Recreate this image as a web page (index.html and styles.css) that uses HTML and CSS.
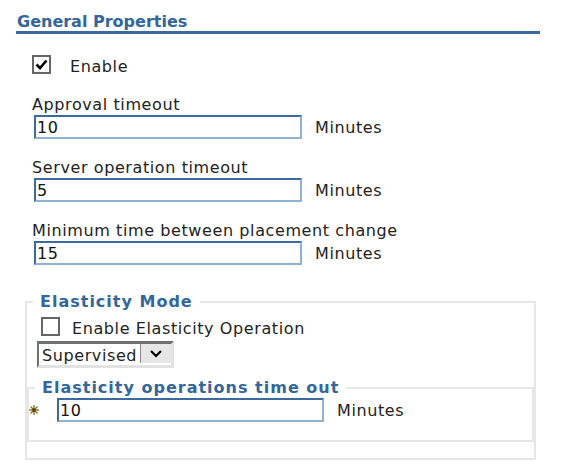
FILE: index.html
```html
<!DOCTYPE html>
<html>
<head>
<meta charset="utf-8">
<link rel="stylesheet" href="styles.css">
</head>
<body>
<div class="page">
  <h2 class="title">General Properties</h2>
  <div class="props">
    <div class="check-row">
      <span class="cb"><svg width="13" height="11" viewBox="0 0 13 11"><polyline points="1.5,5.5 5,9 11.5,1.5" fill="none" stroke="#000" stroke-width="2.6"/></svg></span>
      <span class="cb-label">Enable</span>
    </div>
    <div class="fields">
      <div class="field">
        <div class="label">Approval timeout</div>
        <div class="inrow"><input class="txt" type="text" value="10"><span class="unit">Minutes</span></div>
      </div>
      <div class="field">
        <div class="label">Server operation timeout</div>
        <div class="inrow"><input class="txt" type="text" value="5"><span class="unit">Minutes</span></div>
      </div>
      <div class="field">
        <div class="label">Minimum time between placement change</div>
        <div class="inrow"><input class="txt" type="text" value="15"><span class="unit">Minutes</span></div>
      </div>
    </div>
  </div>
  <fieldset class="mode">
    <legend class="lg">Elasticity Mode</legend>
    <div class="check-row inner">
      <span class="cb"></span>
      <span class="cb-label">Enable Elasticity Operation</span>
    </div>
    <div class="select-wrap">
      <div class="select">
        <span class="sel-text">Supervised</span>
        <span class="sel-btn"><svg width="12" height="8" viewBox="0 0 12 8"><polyline points="1,1 6,6 11,1" fill="none" stroke="#000" stroke-width="2.2"/></svg></span>
      </div>
    </div>
    <fieldset class="sub">
      <legend class="lg">Elasticity operations time out</legend>
      <div class="inrow req">
        <svg class="star" width="10" height="10" viewBox="0 0 10 10">
          <g stroke="#8c7a2e" stroke-width="1.4">
            <line x1="5" y1="0" x2="5" y2="10"/>
            <line x1="0" y1="5" x2="10" y2="5"/>
            <line x1="1.5" y1="1.5" x2="8.5" y2="8.5"/>
            <line x1="8.5" y1="1.5" x2="1.5" y2="8.5"/>
          </g>
          <circle cx="5" cy="5" r="2" fill="#5c4c14"/>
        </svg>
        <input class="txt" type="text" value="10"><span class="unit">Minutes</span>
      </div>
    </fieldset>
  </fieldset>
</div>
</body>
</html>
```

FILE: styles.css
```css
body {
  margin: 0;
  font-family: "DejaVu Sans", Verdana, sans-serif;
  font-size: 16px;
  color: #222;
  letter-spacing: 0.6px;
  background: #fff;
}
.page {
  padding-left: 16px;
  width: 524px;
}
.title {
  margin: 0;
  padding: 12px 0 0 1px;
  font-size: 16px;
  line-height: 19px;
  font-weight: bold;
  color: #336699;
  letter-spacing: 0;
  border-bottom: 3px solid #3a6a9f;
}
.props {
  padding: 21px 0 0 16px;
}
.check-row {
  display: flex;
  align-items: flex-start;
}
.cb {
  width: 19px;
  height: 19px;
  box-sizing: border-box;
  border: 2px solid #666;
  background: #fff;
  display: flex;
  align-items: center;
  justify-content: center;
  flex: none;
}
.cb-label {
  margin-top: 2px;
  margin-left: 19px;
  line-height: 19px;
}
.fields {
  display: flex;
  flex-direction: column;
  gap: 19px;
  margin-top: 19px;
}
.label {
  line-height: 19px;
}
.inrow {
  display: flex;
  align-items: center;
  margin-top: 1px;
}
.txt {
  box-sizing: border-box;
  width: 268px;
  height: 24px;
  margin: 0 0 0 2px;
  padding: 0 0 0 1px;
  border-style: solid;
  border-width: 2px;
  border-color: #3a6a9f #8fb1d3 #8fb1d3 #3a6a9f;
  font: inherit;
  letter-spacing: inherit;
  color: #111;
  background: #fff;
  outline: none;
}
.unit {
  margin-left: 13px;
  line-height: 19px;
}
.mode {
  margin: 27px 0 0 9px;
  width: 511px;
  box-sizing: border-box;
  border: 2px solid #e6e6e6;
  padding: 0 0 16px 0;
  min-width: 0;
}
.lg {
  margin-left: 6px;
  padding: 0 7px;
  font-weight: bold;
  color: #336699;
  letter-spacing: 1px;
  line-height: 19px;
}
.check-row.inner {
  margin: 6px 0 0 14px;
}
.check-row.inner .cb-label {
  margin-left: 12px;
}
.select-wrap {
  margin: 3px 0 0 10px;
}
.select {
  display: inline-flex;
  align-items: stretch;
  height: 27px;
  box-sizing: border-box;
  border-style: solid;
  border-width: 3px 3px 3px 2px;
  border-color: #707070 #e2e2e2 #e2e2e2 #707070;
  background: #fff;
}
.sel-text {
  padding: 2px 3px 0 3px;
  line-height: 19px;
}
.sel-btn {
  width: 30px;
  margin-bottom: 2px;
  background: #e6e6e6;
  border-left: 1px solid #8a8a8a;
  display: flex;
  align-items: center;
  justify-content: center;
}
.sub {
  margin: 10px 0 0 0;
  border: 2px solid #e6e6e6;
  padding: 0 0 18px 0;
  min-width: 0;
}
.req .star {
  flex: none;
}
.req .txt {
  margin-left: 18px;
  width: 267px;
}
```
